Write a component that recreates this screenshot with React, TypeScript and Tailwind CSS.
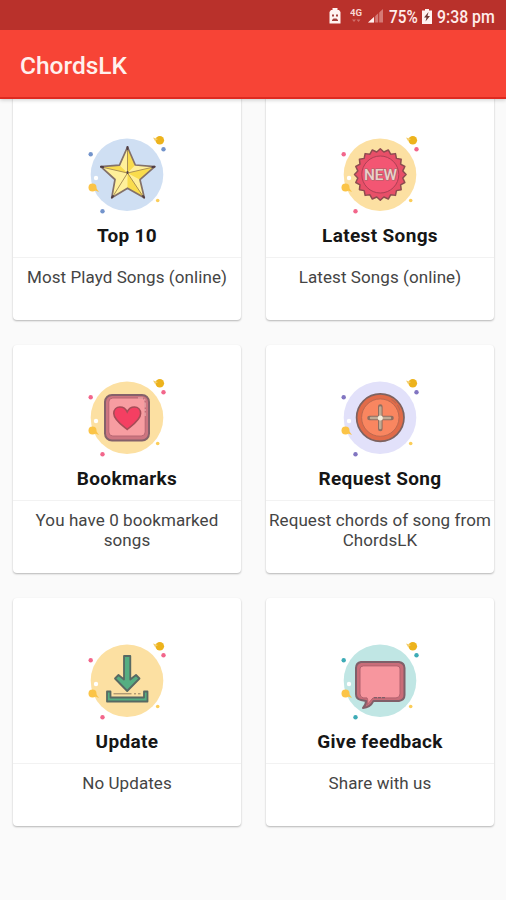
import type { ReactNode } from "react";

type BlobProps = {
    circle: string;
    dots: string;
    children: ReactNode;
};

const Blob = ({ circle, dots, children }: BlobProps) => (
    <svg viewBox="0 0 100 100" className="w-[100px] h-[100px] shrink-0">
        <circle cx="50" cy="49.7" r="36.3" fill={circle} />
        <circle cx="82.8" cy="15.3" r="4.3" fill="#edb31c" />
        <path d="M76 12.5l5 1.5-3 2z" fill="#f3cd6a" />
        <circle cx="86.5" cy="24.3" r="2.2" fill={dots} />
        <circle cx="13.7" cy="29.2" r="2.2" fill={dots} />
        <circle cx="25.5" cy="86.2" r="2.2" fill={dots} />
        <circle cx="19" cy="53" r="2.2" fill="#fff" />
        <circle cx="15.5" cy="62.5" r="4" fill="#fbc447" />
        <path d="M17 60l5 7-5-2z" fill="#fbc447" />
        <circle cx="80.7" cy="75.5" r="1.8" fill="#fbcd59" />
        {children}
    </svg>
);

const StarIcon = () => (
    <Blob circle="#cfdff3" dots="#7394cc">
        <path
            d="M50.5 22l7.8 18 19.5 1.7-14.8 13 4.3 18.1-16.8-9.6L34.7 72.8 38 54.5 23.8 41.7l18.7-1.5z"
            fill="#fff09a"
        />
        <path d="M50.5 22v26l7.8-8z M50.5 48l27.3-6.3-14.8 13z M50.5 48l16.8 24.8-16.8-9.6z M50.5 48l-8-7.8-18.7 1.5z" fill="#f9dc4d" />
        <path d="M50.5 48V23M50.5 48l26-6M50.5 48l16 24M50.5 48l-15 24M50.5 48l-26-6" stroke="#a38750" strokeWidth=".9" />
        <path
            d="M50.5 22l7.8 18 19.5 1.7-14.8 13 4.3 18.1-16.8-9.6L34.7 72.8 38 54.5 23.8 41.7l18.7-1.5z"
            fill="none"
            stroke="#83716a"
            strokeWidth="1.7"
            strokeLinejoin="round"
        />
        <path
            d="M50.5 22v2M24 41.8l2 .3M75.5 42l2-.3M35 72.5l1-1.5M66 71l1 1.5M50.5 47v1"
            stroke="#4f3d45"
            strokeWidth="2"
            strokeLinecap="round"
        />
    </Blob>
);

const badgePoints = Array.from({ length: 40 }, (_, i) => {
    const angle = (i * Math.PI) / 20 - Math.PI / 2;
    const r = i % 2 ? 22.8 : 25.8;
    return `${50.3 + r * Math.cos(angle)},${49.5 + r * Math.sin(angle)}`;
}).join(" ");

const NewIcon = () => (
    <Blob circle="#fce0a2" dots="#f2668b">
        <polygon points={badgePoints} fill="#e84f68" stroke="#8d4c50" strokeWidth="1.5" strokeLinejoin="round" />
        <circle cx="50.3" cy="49.5" r="18.5" fill="#f35673" stroke="#ad4055" strokeWidth="1" />
        <text
            x="34"
            y="54.5"
            textLength="33"
            lengthAdjust="spacingAndGlyphs"
            fill="#ead1cb"
            stroke="#a9636a"
            strokeWidth="1.2"
            paintOrder="stroke"
            className="font-['Roboto',sans-serif] text-[14px] font-medium"
        >
            NEW
        </text>
    </Blob>
);

const HeartIcon = () => (
    <Blob circle="#fce0a2" dots="#f2668b">
        <rect x="28" y="27" width="44" height="45.5" rx="7" fill="#cd7580" stroke="#85616a" strokeWidth="2" />
        <rect x="31.8" y="30" width="36.4" height="38" rx="4" fill="#f79da1" stroke="#b76773" strokeWidth="1" />
        <path d="M61 30h4q3 0 3 4v14" fill="none" stroke="#e7a0a4" strokeWidth="1.6" strokeDasharray="5 1.5 2 1.5" />
        <path
            d="M50.2 61.5C46 58 36.8 52 36.8 45.5c0-4 2.7-6.5 6.1-6.5 3.5 0 6 2 7.3 4.8 1.3-2.8 3.8-4.8 7.3-4.8 3.4 0 6.1 2.5 6.1 6.5 0 6.5-9.2 12.5-13.4 16z"
            fill="#f43f62"
            stroke="#a64c57"
            strokeWidth="1.6"
        />
    </Blob>
);

const ButtonIcon = () => (
    <Blob circle="#e2e1fa" dots="#8175c1">
        <circle cx="50.3" cy="49.6" r="23.7" fill="#e16b49" stroke="#7d6260" strokeWidth="1.7" />
        <circle cx="50.3" cy="49.6" r="18.7" fill="#f98660" stroke="#bc6950" strokeWidth="1" />
        <path d="M61.5 31.5q7 4 8.5 11.5" fill="none" stroke="#bc6950" strokeWidth="1.2" strokeDasharray="6 2" />
        <path d="M50.3 38.5v22.5M39.5 50h22" stroke="#906e60" strokeWidth="4.6" strokeLinecap="round" />
        <path d="M50.3 39.5v20.5M41 50h19" stroke="#c0aa93" strokeWidth="2.6" strokeLinecap="round" />
        <circle cx="50.3" cy="50" r="2.5" fill="#f4eedb" />
    </Blob>
);

const DownloadIcon = () => (
    <Blob circle="#fce0a2" dots="#f2668b">
        <path
            d="M47 25h6.3v23.5l5.7-4.5 3.5 3.5L50.2 60 38 47.5l3.5-3.5 5.5 4.5z"
            fill="#55ae82"
            stroke="#586963"
            strokeWidth="1.8"
            strokeLinejoin="round"
        />
        <path
            d="M30 60.5h3.5v6h33.5v-6h3.5v10H30z"
            fill="#55ae82"
            stroke="#586963"
            strokeWidth="1.8"
            strokeLinejoin="round"
        />
        <path d="M36.5 62.8h18M57 62.8h2M61 62.8h2.5" stroke="#927d60" strokeWidth="1" />
    </Blob>
);

const BubbleIcon = () => (
    <Blob circle="#c0e6e4" dots="#3dabb6">
        <g transform="translate(0 -.6)">
            <path
                d="M31 31.5h38q5.5 1 5.5 6v27q0 5-5.5 6H43.5c-2 4-5.5 7-10.5 7 2-2 3-4.5 3-7L31 69.5q-5-1-5-6v-26q0-5 5-6z"
                fill="#c96d79"
                stroke="#805f69"
                strokeWidth="2"
                strokeLinejoin="round"
            />
            <path
                d="M33.5 35.5h33.5q3 0 3 3v25q0 4-4 4H43l-6 7c1-3 1-5 0-7h-4q-3-1-3-4v-25q0-3 3.5-3z"
                fill="#f7969e"
                stroke="#b2626f"
                strokeWidth="1"
            />
            <path d="M44 67.3h11" stroke="#805f69" strokeWidth="1.2" strokeDasharray="3 1" />
        </g>
    </Blob>
);

const items = [
    { title: "Top 10", text: "Most Playd Songs (online)", icon: <StarIcon /> },
    { title: "Latest Songs", text: "Latest Songs (online)", icon: <NewIcon /> },
    { title: "Bookmarks", text: "You have 0 bookmarked songs", icon: <HeartIcon /> },
    { title: "Request Song", text: "Request chords of song from ChordsLK", icon: <ButtonIcon /> },
    { title: "Update", text: "No Updates", icon: <DownloadIcon /> },
    { title: "Give feedback", text: "Share with us", icon: <BubbleIcon /> },
];

const StatusBar = () => (
    <div className="flex h-[30px] items-center justify-end bg-[#b9312b] pr-[11px] pt-[2px] text-[18px] text-[#ffecea]">
        <svg viewBox="0 0 12 16" className="mr-[9px] h-4 w-3">
            <path d="M3.5 0h5v2H10l1.5 2v11.5H.5V4L2 2h1.5z" fill="#fff3f1" />
            <path d="M3 6.5h2v2H3zM7 6.5h2v2H7zM3 12l1.5-1.5h3L9 12v1H3z" fill="#a4403c" />
        </svg>
        <svg viewBox="0 0 12 16" className="mr-[6px] h-4 w-3">
            <text x="0" y="8" textLength="12" lengthAdjust="spacingAndGlyphs" fill="#f8d7d4" className="text-[9px] font-bold">
                4G
            </text>
            <path d="M2 11.5L4 14l2-2.5zM6.5 11.5h4l-2 2.5z" fill="#d0706c" />
        </svg>
        <svg viewBox="0 0 16 16" className="mr-[5px] h-4 w-4">
            <path d="M0 14.5L15 1v13.5z" fill="#d57a76" />
            <path d="M0 14.5l6-5.5v5.5z" fill="#fff0ee" />
            <path d="M6.7 7v8M10.7 3.5v11.5" stroke="#b9312b" strokeWidth="1" />
        </svg>
        <span className="inline-block w-[33px] origin-left whitespace-nowrap font-medium scale-x-[.85]">75%</span>
        <svg viewBox="0 0 10 15" className="mr-[5px] h-[15px] w-[10px]">
            <path d="M3 0h4v1.5h3V15H0V1.5h3z" fill="#fff3f1" />
            <path d="M6.5 3L2 8.5h2.5L3.5 12.5 8 7H5.5z" fill="#6d3935" />
        </svg>
        <span className="inline-block w-[58px] origin-left whitespace-nowrap font-medium scale-x-[.88]">9:38 pm</span>
    </div>
);

const App = () => {
    return (
        <div className="h-[900px] overflow-hidden bg-[#fafafa] font-['Roboto',sans-serif]">
            <header className="relative z-10 shadow-[0_1px_4px_rgba(0,0,0,0.2)]">
                <StatusBar />
                <div className="flex h-[69px] items-center border-b-2 border-[#de2a20] bg-[#f74436] px-5 pt-[5px]">
                    <h1 className="text-[24.5px] font-medium text-[#fff0ed]">ChordsLK</h1>
                </div>
            </header>
            <main className="-mt-[7px] grid grid-cols-[228px_228px] gap-[25px] pl-[13px]">
                {items.map(({ title, text, icon }) => (
                    <section
                        key={title}
                        className="flex h-[228px] flex-col items-center justify-center rounded bg-white shadow-[0_1px_2px_rgba(0,0,0,0.28)]"
                    >
                        {icon}
                        <h2 className="-mt-px text-[19px] leading-6 font-bold tracking-[0.35px] text-[#161616]">{title}</h2>
                        <div className="mt-[9px] h-px w-full bg-[#f2f2f2]" />
                        <p className="mt-[9px] mb-px w-full text-center text-[17px] leading-5 tracking-[0.08px] text-[#444]">
                            {text}
                        </p>
                    </section>
                ))}
            </main>
        </div>
    );
};

export default App;
